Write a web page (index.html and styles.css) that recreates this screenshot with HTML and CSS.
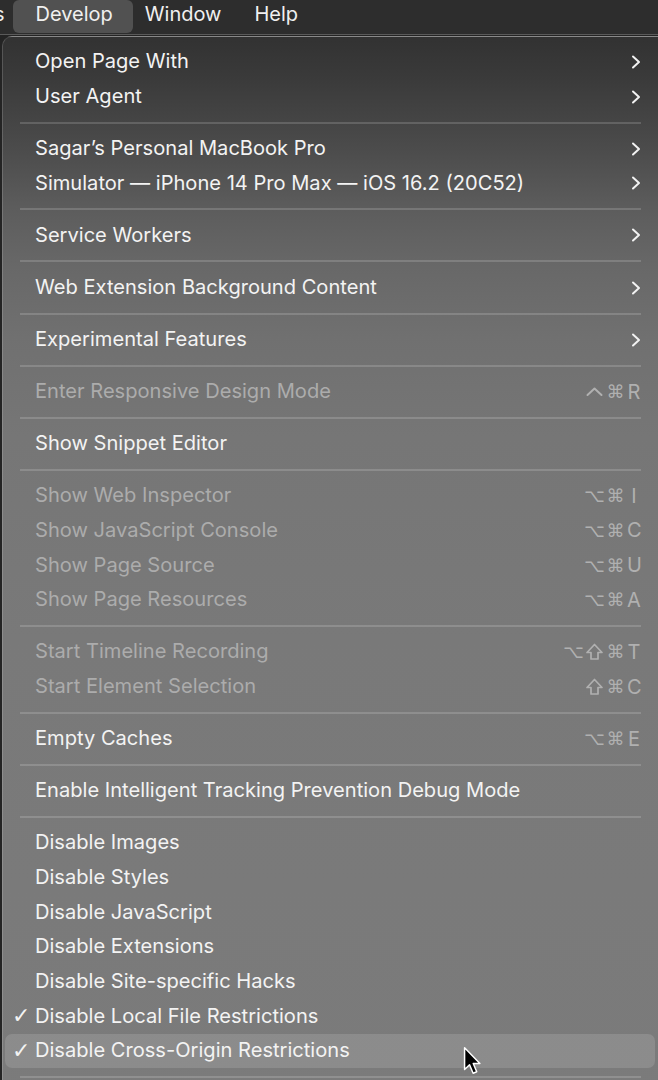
FILE: index.html
```html
<!DOCTYPE html>
<html>
<head>
<meta charset="utf-8">
<link rel="stylesheet" href="styles.css">
</head>
<body>
<div class="screen">
  <div class="menubar">
    <span class="bar-item cut">s</span>
    <span class="bar-item active">Develop</span>
    <span class="bar-item window">Window</span>
    <span class="bar-item help">Help</span>
  </div>
  <div class="panel">
    <div class="row"><span class="check"></span><span class="label">Open Page With</span><svg class="chev" viewBox="0 0 10 14"><path d="M2 1.5 L8 7 L2 12.5"/></svg></div>
    <div class="row"><span class="check"></span><span class="label">User Agent</span><svg class="chev" viewBox="0 0 10 14"><path d="M2 1.5 L8 7 L2 12.5"/></svg></div>
    <div class="sep"></div>
    <div class="row"><span class="check"></span><span class="label">Sagar’s Personal MacBook Pro</span><svg class="chev" viewBox="0 0 10 14"><path d="M2 1.5 L8 7 L2 12.5"/></svg></div>
    <div class="row"><span class="check"></span><span class="label">Simulator — iPhone 14 Pro Max — iOS 16.2 (20C52)</span><svg class="chev" viewBox="0 0 10 14"><path d="M2 1.5 L8 7 L2 12.5"/></svg></div>
    <div class="sep"></div>
    <div class="row"><span class="check"></span><span class="label">Service Workers</span><svg class="chev" viewBox="0 0 10 14"><path d="M2 1.5 L8 7 L2 12.5"/></svg></div>
    <div class="sep"></div>
    <div class="row"><span class="check"></span><span class="label">Web Extension Background Content</span><svg class="chev" viewBox="0 0 10 14"><path d="M2 1.5 L8 7 L2 12.5"/></svg></div>
    <div class="sep"></div>
    <div class="row"><span class="check"></span><span class="label">Experimental Features</span><svg class="chev" viewBox="0 0 10 14"><path d="M2 1.5 L8 7 L2 12.5"/></svg></div>
    <div class="sep"></div>
    <div class="row disabled"><span class="check"></span><span class="label">Enter Responsive Design Mode</span><span class="keys"><svg class="mod-icon" viewBox="0 0 20 20"><path class="ctrl" d="M3 13 L10 6.5 L17 13"/></svg><span class="mod">⌘</span><span class="key">R</span></span></div>
    <div class="sep"></div>
    <div class="row"><span class="check"></span><span class="label">Show Snippet Editor</span></div>
    <div class="sep"></div>
    <div class="row disabled"><span class="check"></span><span class="label">Show Web Inspector</span><span class="keys"><span class="mod">⌥</span><span class="mod">⌘</span><span class="key">I</span></span></div>
    <div class="row disabled"><span class="check"></span><span class="label">Show JavaScript Console</span><span class="keys"><span class="mod">⌥</span><span class="mod">⌘</span><span class="key">C</span></span></div>
    <div class="row disabled"><span class="check"></span><span class="label">Show Page Source</span><span class="keys"><span class="mod">⌥</span><span class="mod">⌘</span><span class="key">U</span></span></div>
    <div class="row disabled"><span class="check"></span><span class="label">Show Page Resources</span><span class="keys"><span class="mod">⌥</span><span class="mod">⌘</span><span class="key">A</span></span></div>
    <div class="sep"></div>
    <div class="row disabled"><span class="check"></span><span class="label">Start Timeline Recording</span><span class="keys"><span class="mod">⌥</span><svg class="mod-icon" viewBox="0 0 20 20"><path class="shift" d="M10 2.5 L17.5 10.5 L13.5 10.5 L13.5 17 L6.5 17 L6.5 10.5 L2.5 10.5 Z"/></svg><span class="mod">⌘</span><span class="key">T</span></span></div>
    <div class="row disabled"><span class="check"></span><span class="label">Start Element Selection</span><span class="keys"><svg class="mod-icon" viewBox="0 0 20 20"><path class="shift" d="M10 2.5 L17.5 10.5 L13.5 10.5 L13.5 17 L6.5 17 L6.5 10.5 L2.5 10.5 Z"/></svg><span class="mod">⌘</span><span class="key">C</span></span></div>
    <div class="sep"></div>
    <div class="row"><span class="check"></span><span class="label">Empty Caches</span><span class="keys"><span class="mod">⌥</span><span class="mod">⌘</span><span class="key">E</span></span></div>
    <div class="sep"></div>
    <div class="row"><span class="check"></span><span class="label">Enable Intelligent Tracking Prevention Debug Mode</span></div>
    <div class="sep"></div>
    <div class="row"><span class="check"></span><span class="label">Disable Images</span></div>
    <div class="row"><span class="check"></span><span class="label">Disable Styles</span></div>
    <div class="row"><span class="check"></span><span class="label">Disable JavaScript</span></div>
    <div class="row"><span class="check"></span><span class="label">Disable Extensions</span></div>
    <div class="row"><span class="check"></span><span class="label">Disable Site-specific Hacks</span></div>
    <div class="row"><span class="check">✓</span><span class="label">Disable Local File Restrictions</span></div>
    <div class="row hover"><span class="check">✓</span><span class="label">Disable Cross-Origin Restrictions</span>
      <svg class="cursor" viewBox="0 0 18 28"><path d="M1.5 1.5 L1.5 22 L6.2 17.6 L9.6 25.6 L13 24.2 L9.7 16.4 L16 16.4 Z" fill="#000" stroke="#fff" stroke-width="1.4" stroke-linejoin="round"/></svg>
    </div>
    <div class="sep"></div>
  </div>
</div>
</body>
</html>
```

FILE: styles.css
```css
html, body {
  margin: 0;
  padding: 0;
}
body {
  width: 658px;
  height: 1080px;
  overflow: hidden;
  background: #222;
  font-family: Inter, "Noto Sans", "DejaVu Sans", sans-serif;
}
.screen {
  width: 658px;
  height: 1080px;
  overflow: hidden;
  background: #242424;
}
.menubar {
  height: 34px;
  background: #2d2d2d;
  display: flex;
  align-items: flex-start;
  border-bottom: 1px solid #5a5a5a;
  margin-left: -6px;
}
.bar-item {
  color: #f0f0f0;
  font-size: 20px;
  height: 33px;
  box-sizing: border-box;
  display: flex;
  align-items: center;
  padding: 0 14px 5px 14px;
  border-radius: 6px;
}
.bar-item.cut {
  padding: 0 8px 5px 0;
}
.bar-item.active {
  background: #515151;
  padding: 0 20px 5px 23px;
}
.bar-item.window {
  padding: 0 16px 5px 12px;
}
.bar-item.help {
  padding: 0 14px 5px 17px;
}
.panel {
  margin-left: 2px;
  margin-top: 1px;
  width: 700px;
  height: 1100px;
  box-sizing: border-box;
  padding-top: 7.6px;
  border-top-left-radius: 10px;
  border-left: 1px solid rgba(255,255,255,0.16);
  border-top: 1px solid rgba(255,255,255,0.10);
  background: linear-gradient(to bottom,
    #323232 0px,
    #3a3a3a 40px,
    #4b4b4b 110px,
    #5c5c5c 170px,
    #686868 230px,
    #707070 300px,
    #767676 400px,
    #797979 600px,
    #7b7b7b 1100px);
}
.row {
  position: relative;
  height: 34.7px;
  width: 650px;
  margin-left: 2px;
  box-sizing: border-box;
  padding: 0 14px 0 7px;
  display: flex;
  align-items: center;
  color: #f3f3f3;
  font-size: 20.1px;
  border-radius: 7px;
}
.row.disabled {
  color: #acacac;
}
.row.hover {
  background: rgba(255,255,255,0.13);
}
.check {
  width: 23px;
  flex: none;
  font-size: 22px;
  font-family: "DejaVu Sans", sans-serif;
  color: #f3f3f3;
  padding-left: 0;
  line-height: 1;
}
.label {
  flex: 1;
  white-space: nowrap;
  padding-bottom: 1px;
}
.chev {
  width: 10px;
  height: 14px;
  margin-right: 0;
  fill: none;
  stroke: #f2f2f2;
  stroke-width: 2;
  stroke-linecap: round;
  stroke-linejoin: round;
}
.keys {
  display: flex;
  align-items: center;
  color: #b0b0b0;
  font-size: 18px;
}
.mod {
  font-family: "DejaVu Sans", sans-serif;
  width: 21px;
  text-align: center;
  font-size: 18px;
}
.mod-icon {
  width: 21px;
  height: 20px;
  fill: none;
  stroke: #b0b0b0;
  stroke-linejoin: round;
  stroke-linecap: round;
}
.mod-icon .ctrl {
  stroke-width: 2;
}
.mod-icon .shift {
  stroke-width: 1.7;
}
.key {
  width: 14px;
  text-align: center;
  margin-left: 1px;
  font-family: Inter, sans-serif;
  font-size: 20px;
}
.sep {
  height: 2px;
  width: 621px;
  margin: 7.7px 0 7.7px 17px;
  background: rgba(255,255,255,0.16);
}
.cursor {
  position: absolute;
  left: 458px;
  top: 12px;
  width: 19px;
  height: 30px;
}
```
